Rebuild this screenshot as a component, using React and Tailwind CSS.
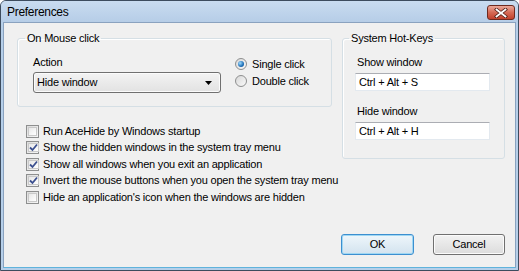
import { useState } from 'react'

const font = { fontFamily: '"Liberation Sans", Arial, sans-serif' }

function CheckBox({ checked, label }) {
  return (
    <div className="flex items-center h-[16.5px] whitespace-nowrap">
      <span className="w-[13px] h-[13px] border border-[#8e8f8f] bg-gradient-to-br from-[#dcdcdc] to-[#f6f6f6] p-[1px] flex">
        <span className="flex-1 border border-[#c9c9c9] bg-gradient-to-br from-[#e8e8e8] to-[#ffffff] flex items-center justify-center">
          {checked && (
            <svg width="9" height="9" viewBox="0 0 9 9">
              <path d="M1 4.5 L3.5 7 L8 1.5" fill="none" stroke="#3b4f8f" strokeWidth="1.8" />
            </svg>
          )}
        </span>
      </span>
      <span className="ml-[4px] text-black">{label}</span>
    </div>
  )
}

function Radio({ checked, label }) {
  return (
    <div className="flex items-center h-[14px]">
      <span className="w-[12px] h-[12px] rounded-full border border-[#8e8f8f] bg-gradient-to-br from-[#d8d8d8] to-[#fafafa] flex items-center justify-center">
        {checked && (
          <span className="w-[6px] h-[6px] rounded-full bg-[radial-gradient(circle_at_35%_35%,#9fdcff,#1f6fb7_60%,#124d86)]" />
        )}
      </span>
      <span className="ml-[5px]">{label}</span>
    </div>
  )
}

function Group({ title, legendClass, className, children }) {
  return (
    <fieldset className={`border border-[#d5dfe5] rounded-[3px] shadow-[inset_1px_1px_0_#fff] ${className}`}>
      <legend className={`px-[2px] leading-[13px] ${legendClass}`}>{title}</legend>
      {children}
    </fieldset>
  )
}

export default function App() {
  const [opts] = useState([
    { label: 'Run AceHide by Windows startup', checked: false },
    { label: 'Show the hidden windows in the system tray menu', checked: true },
    { label: 'Show all windows when you exit an application', checked: true },
    { label: 'Invert the mouse buttons when you open the system tray menu', checked: true },
    { label: "Hide an application's icon when the windows are hidden", checked: false },
  ])

  return (
    <div style={font} className="w-[519px] h-[271px] text-[11px] leading-[13px] tracking-[-0.2px] text-black">
      <div className="w-full h-full border border-[#3d4c5e] rounded-t-[6px] bg-[#b6cfe9] flex flex-col px-[2px] pb-[2px]">
        {/* title bar */}
        <div className="h-[21px] -mx-[2px] px-[6px] flex items-start justify-between rounded-t-[5px] bg-gradient-to-b from-[#c9dcf0] to-[#b6cde7]">
          <span className="text-[12px] leading-[14px] mt-[4px] tracking-[-0.3px] text-black">Preferences</span>
          <button className="mt-[4px] -mr-[3px] w-[28px] h-[15px] rounded-[3px] border border-[#6e2a1f] bg-gradient-to-b from-[#eaa89a] via-[#d56a55] to-[#c2402b] flex items-center justify-center">
            <svg width="14" height="10" viewBox="0 0 14 10">
              <path d="M2.5 1.5 L11.5 8.5 M11.5 1.5 L2.5 8.5" stroke="#4a1c15" strokeWidth="3.4" strokeLinecap="square" />
              <path d="M2.5 1.5 L11.5 8.5 M11.5 1.5 L2.5 8.5" stroke="#ffffff" strokeWidth="1.8" strokeLinecap="square" />
            </svg>
          </button>
        </div>

        {/* client area */}
        <div className="relative flex-1 border border-[#8aa2bf] border-b-[#5fb3dc] bg-[#f0f0f0] flex flex-col pl-[13px] pt-[9px] pr-[10px] pb-[12px]">
          <div className="flex">
            <div className="flex flex-col w-[315px]">
              <Group title="On Mouse click" legendClass="ml-[7px]" className="w-[315px] h-[75px]">
                <div className="flex mt-[11px] pl-[15px]">
                  <div className="flex flex-col w-[188px]">
                    <span className="h-[13px]">Action</span>
                    <div className="mt-[3px] h-[21px] rounded-[3px] border border-[#707070] bg-gradient-to-b from-[#f3f3f3] to-[#e2e2e2] shadow-[inset_0_0_0_1px_#fbfbfb] flex items-center justify-between pl-[3px] pr-[8px]">
                      <span>Hide window</span>
                      <svg width="7" height="4" viewBox="0 0 7 4">
                        <path d="M0 0 H7 L3.5 4 Z" fill="#000" />
                      </svg>
                    </div>
                  </div>
                  <div className="flex flex-col gap-[3px] ml-[14px] mt-[1px]">
                    <Radio checked label="Single click" />
                    <Radio label="Double click" />
                  </div>
                </div>
              </Group>

              <div className="flex flex-col mt-[16px] ml-[9px]">
                {opts.map(o => (
                  <CheckBox key={o.label} checked={o.checked} label={o.label} />
                ))}
              </div>
            </div>

            <Group title="System Hot-Keys" legendClass="ml-[6px]" className="ml-[10px] w-[164px] h-[127px]">
              <div className="flex flex-col mt-[11px] pl-[12px]">
                <span className="h-[13px] ml-[2px]">Show window</span>
                <div className="mt-[4px] w-[135px] h-[18px] bg-white border border-[#e3e9ef] border-t-[#abadb3] flex items-center pl-[3px]">
                  Ctrl + Alt + S
                </div>
                <span className="h-[13px] ml-[2px] mt-[14px]">Hide window</span>
                <div className="mt-[4px] w-[135px] h-[18px] bg-white border border-[#e3e9ef] border-t-[#abadb3] flex items-center pl-[3px]">
                  Ctrl + Alt + H
                </div>
              </div>
            </Group>
          </div>

          <div className="mt-auto flex justify-end gap-[19px]">
            <button className="w-[73px] h-[21px] rounded-[3px] border border-[#3c8fd0] bg-gradient-to-b from-[#eef6fb] to-[#d3e3ef] shadow-[inset_0_0_0_1px_#9fd7f3]">
              OK
            </button>
            <button className="w-[72px] h-[21px] rounded-[3px] border border-[#707070] bg-gradient-to-b from-[#f2f2f2] to-[#dcdcdc] shadow-[inset_0_0_0_1px_#fbfbfb]">
              Cancel
            </button>
          </div>
        </div>
      </div>
    </div>
  )
}
